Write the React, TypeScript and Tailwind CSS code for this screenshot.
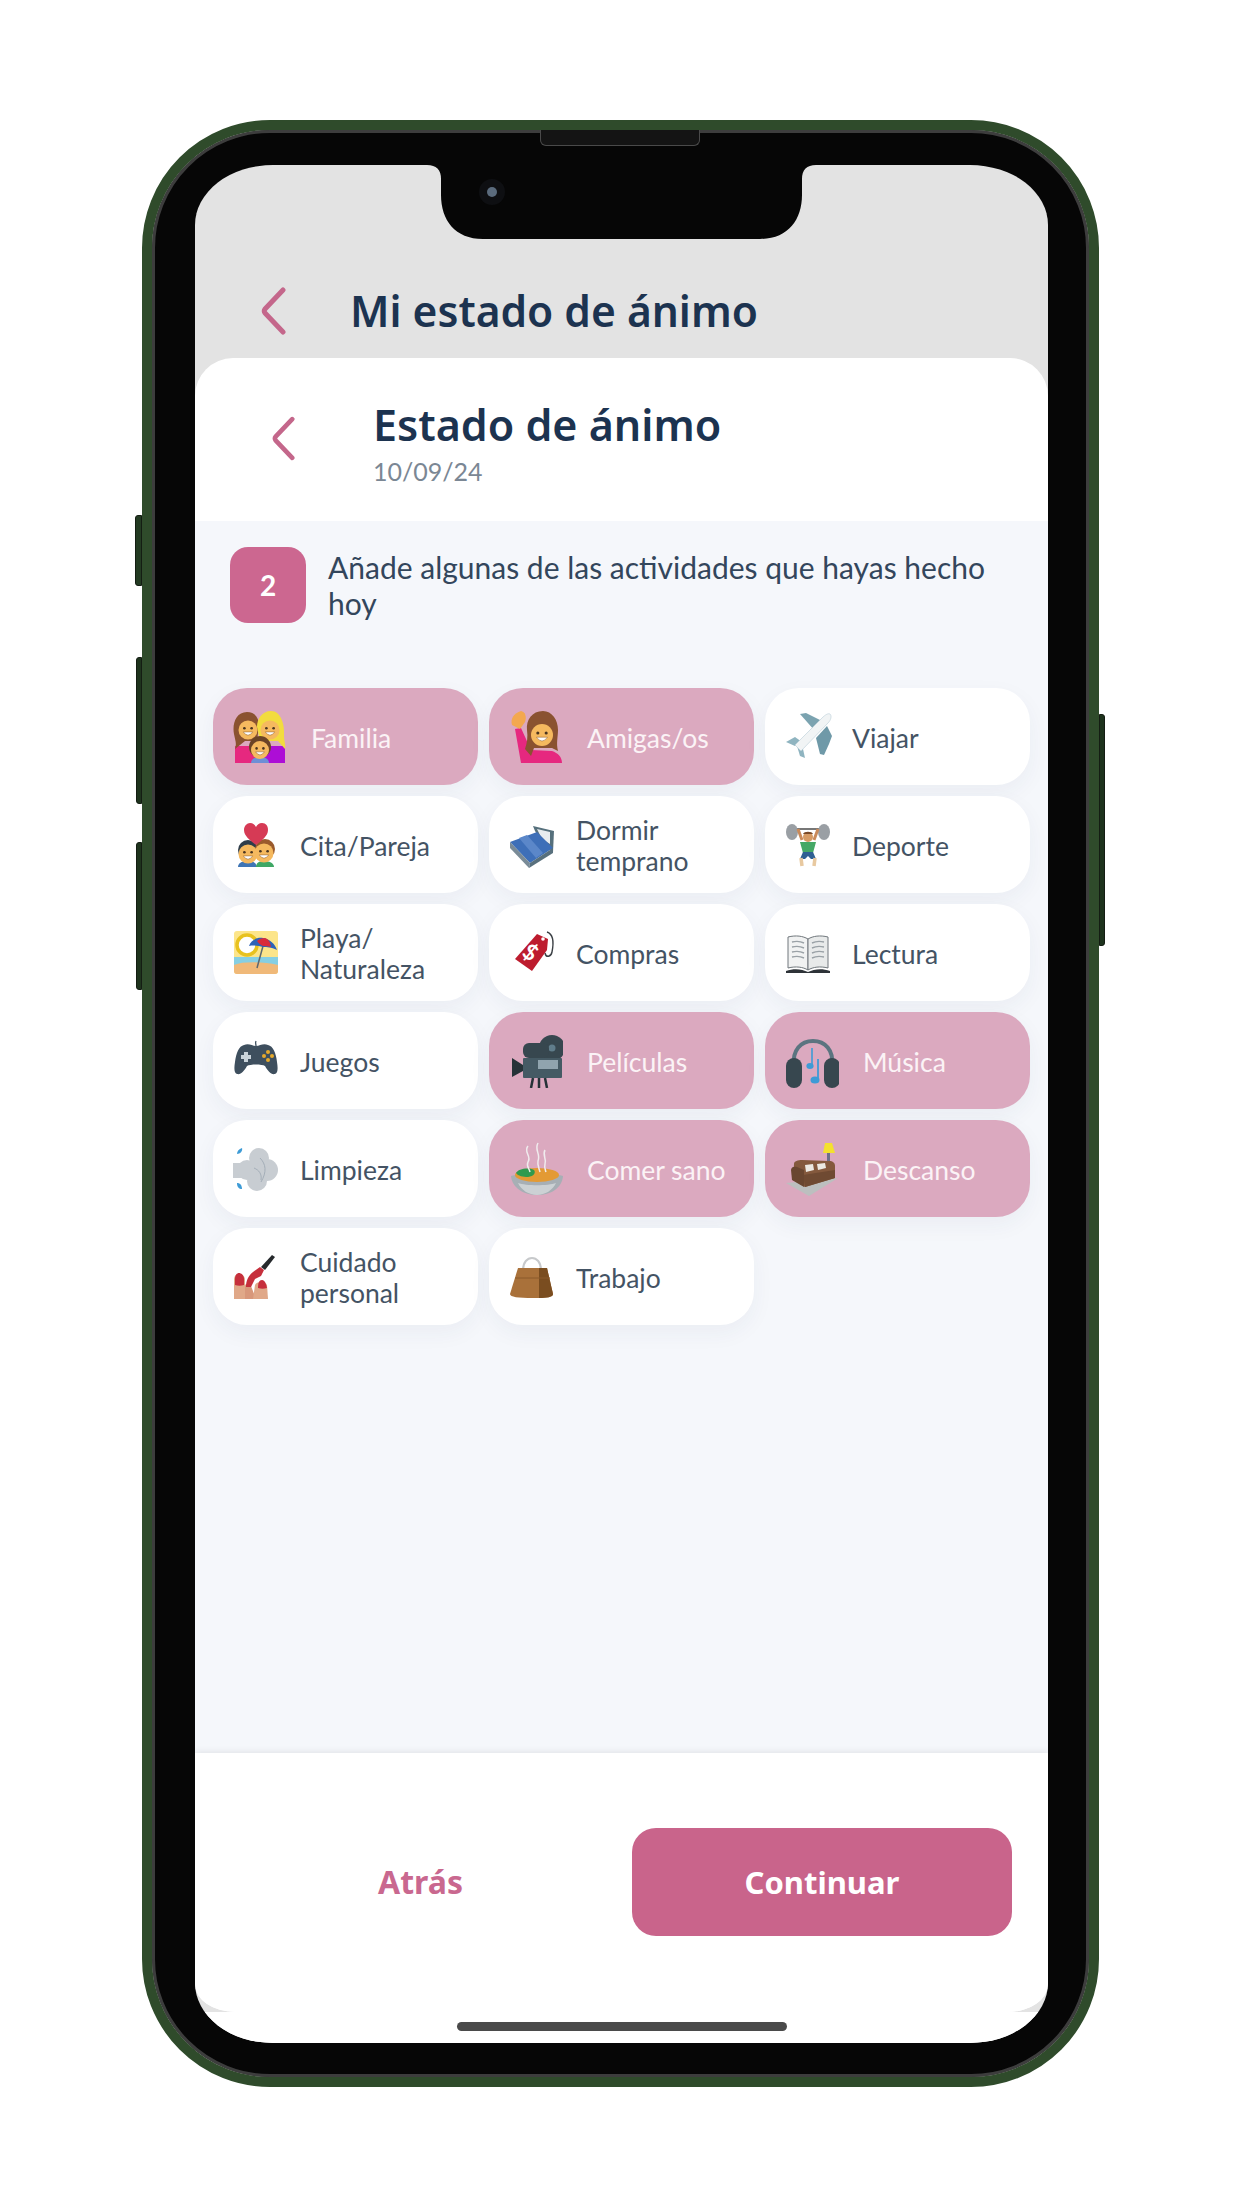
import React from 'react';

const Face = ({ cx, cy, r }: { cx: number; cy: number; r: number }) => (
  <g>
    <circle cx={cx} cy={cy} r={r} fill="#f5b95f" />
    <circle cx={cx - r * 0.38} cy={cy - r * 0.18} r={r * 0.14} fill="#4a3520" />
    <circle cx={cx + r * 0.38} cy={cy - r * 0.18} r={r * 0.14} fill="#4a3520" />
    <path d={`M${cx - r * 0.5} ${cy + r * 0.2}Q${cx} ${cy + r * 0.9} ${cx + r * 0.5} ${cy + r * 0.2}Z`} fill="#fff" stroke="#8a5a2a" strokeWidth="0.5" />
  </g>
);

const Icon = ({ children }: { children: React.ReactNode }) => (
  <svg viewBox="0 0 54 54" className="w-[54px] h-[54px] shrink-0">
    {children}
  </svg>
);

const Familia = () => (
  <Icon>
    <path d="M2 53V36h25v17z" fill="#e6287f" />
    <path d="M26 53V36h26v17z" fill="#ad0ed6" />
    <path d="M14 2C3 2-1 14 1 24c1 6 3 9 1 15l10-8h12l2-15C26 8 22 2 14 2z" fill="#8a5230" />
    <path d="M38 1c-9 0-14 8-14 16l3 14h18l7 8c1-5-1-8-1-13 1-11-3-25-13-25z" fill="#f2dc3e" />
    <Face cx={15} cy={20} r={9.5} />
    <Face cx={37} cy={20} r={9.5} />
    <path d="M18 53c0-4 4-6 9-6s9 2 9 6z" fill="#6d8fd6" />
    <circle cx={27} cy={37} r={11} fill="#6b4426" />
    <Face cx={27} cy={40} r={9} />
  </Icon>
);

const Amigas = () => (
  <Icon>
    <path d="M6 19l6 34h41c0-6-4-10-10-12l-21-1-10-22z" fill="#e6287f" />
    <path d="M3 15C1 9 5 3 12 1c4 1 6 5 4 11l-5 7z" fill="#f3a84f" />
    <path d="M34 1C23 1 17 10 18 20c1 7 0 13-2 19l6 7 3-8h18l6 3c-2-8 0-14 0-21 0-10-6-19-15-19z" fill="#8a5230" />
    <Face cx={33} cy={25} r={11} />
  </Icon>
);

const Viajar = () => (
  <Icon>
    <path d="M15 4l6-1 18 9-9 9z" fill="#7ba3b0" />
    <path d="M44 34l3-8-5-10-11 12 4 16 4 1z" fill="#6f99a8" />
    <path d="M1 32l9-5 7 5-7 4z" fill="#8fb4c0" />
    <path d="M20 48l-2-9-6-3 3 10z" fill="#8fb4c0" />
    <path d="M45 4c2 2 1 6-2 9L16 41l-6-6L37 8c3-3 6-5 8-4z" fill="#f1f4f5" stroke="#b8cdd6" strokeWidth="0.6" />
  </Icon>
);

const Cita = () => (
  <Icon>
    <path d="M5 49c0-4 4-6 10-6s8 2 9 6z" fill="#3f75b5" />
    <path d="M23 49c0-4 3-6 8-6s10 2 10 6z" fill="#3fa765" />
    <circle cx={15} cy={32} r={10} fill="#2f3d4a" />
    <circle cx={32} cy={31} r={10} fill="#9a5a2c" />
    <Face cx={15} cy={36} r={9.5} />
    <Face cx={31} cy={35} r={9.5} />
    <path d="M23 27C17 22 11 18 11 12c0-4 3-7 6-7 3 0 5 2 6 4 1-2 3-4 6-4 4 0 6 3 6 7 0 6-6 10-12 15z" fill="#d63a55" />
  </Icon>
);

const Dormir = () => (
  <Icon>
    <path d="M24 8l21 5-1 21-8-7-10-14z" fill="#56707c" />
    <path d="M28 11l13 3v12l-8-5z" fill="#e8ecef" />
    <path d="M1 24l27-10 16 16-23 15z" fill="#3e6fb8" />
    <path d="M1 24l20 21-1 5L1 30z" fill="#7a8b97" />
    <path d="M21 45l23-15v5L20 50z" fill="#58707d" />
    <path d="M10 20l8-3 16 18-7 5z" fill="#5b87c9" />
  </Icon>
);

const Deporte = () => (
  <Icon>
    <path d="M7 11h32" stroke="#777" strokeWidth="2" />
    <ellipse cx={7} cy={14} rx={6} ry={8} fill="#9a9fa4" />
    <ellipse cx={39} cy={14} rx={6} ry={8} fill="#9a9fa4" />
    <path d="M13 11l4 11M33 11l-4 11" stroke="#c98a5a" strokeWidth="3" />
    <circle cx={23} cy={19} r={5} fill="#d69a63" />
    <path d="M18 16c1-3 9-3 10 0z" fill="#7a4a28" />
    <path d="M15 24h16l-3 11H18z" fill="#45a866" />
    <path d="M18 34h10l3 7h-5l-3-3-3 3h-5z" fill="#2f5f92" />
    <path d="M16 40l1 8M30 40l-1 8" stroke="#e8c9a0" strokeWidth="3.5" />
  </Icon>
);

const Playa = () => (
  <Icon>
    <rect x={1} y={5} width={44} height={43} rx={3} fill="#fce58a" />
    <rect x={1} y={31} width={44} height={8} fill="#86cfe3" />
    <path d="M1 39c10-4 30-3 44 0v6a3 3 0 0 1-3 3H4a3 3 0 0 1-3-3z" fill="#f0b979" />
    <circle cx={14} cy={19} r={10} fill="#fff" stroke="#e8c21f" strokeWidth="3.5" />
    <path d="M30 20l-6 22" stroke="#5c6770" strokeWidth="1.5" />
    <path d="M16 20c2-6 8-9 14-8 7 1 12 6 14 12-6-3-10-3-14-3-4-1-9-2-14-1z" fill="#2e63b8" />
    <path d="M24 15c2-2 5-3 8-3 3 1 5 3 6 9-3-1-6-1-8-1-2-1-4-2-6-5z" fill="#d92b3a" />
  </Icon>
);

const Juegos = () => (
  <Icon>
    <path d="M23 12c0-2-1-3 0-5" stroke="#3e4f5e" strokeWidth="1.3" fill="none" />
    <path d="M11 11c5-2 8 1 12 1s7-3 12-1c5 1 8 8 9 17 1 6 1 11-2 12-4 1-7-3-10-8-3-2-15-2-18 0-3 5-6 9-10 8C1 39 1 34 2 28c1-9 4-16 9-17z" fill="#3e4f5e" />
    <path d="M11 18h4v3h3v4h-3v3h-4v-3H8v-4h3z" fill="#c9d3da" />
    <circle cx={35} cy={18} r={2} fill="#e6a92c" />
    <circle cx={31} cy={22} r={2} fill="#e6a92c" />
    <circle cx={39} cy={22} r={2} fill="#e6a92c" />
    <circle cx={35} cy={26} r={2} fill="#e6a92c" />
  </Icon>
);

const Limpieza = () => (
  <Icon>
    <path d="M0 21h14l3 15H0z" fill="#c8cdd2" />
    <circle cx={26} cy={16} r={10} fill="#c8cdd2" />
    <circle cx={34} cy={28} r={11} fill="#c8cdd2" />
    <circle cx={24} cy={39} r={10} fill="#c8cdd2" />
    <circle cx={14} cy={28} r={10} fill="#c8cdd2" />
    <path d="M27 16c6 6 7 14 1 24M21 26c5 2 8 6 7 12" stroke="#a4aeb8" strokeWidth="1" fill="none" />
    <path d="M9 6c1 3-2 6-5 6 0-3 2-5 5-6zM4 41c3 0 5 2 5 6-3 0-5-2-5-6z" fill="#3d9bd6" />
  </Icon>
);

const Cuidado = () => (
  <Icon>
    <path d="M1 49V30c0-4 2-6 5-6s6 2 6 6v19z" fill="#e0a888" />
    <path d="M12 49V36c0-3 5-3 6 0l5 13z" fill="#d8977a" />
    <path d="M20 49l2-14c1-4 11-4 12 0l1 14z" fill="#e0a888" />
    <path d="M2 35V29c0-4 2-6 4-6s5 2 5 6v6c-3 1-6 1-9 0z" fill="#c62f3c" />
    <path d="M25 38c0-5 1-8 4-8s4 4 5 8c-3 1-6 1-9 0z" fill="#c62f3c" />
    <path d="M13 37c0-6 2-11 7-15l7-5 4 3-3 6-6 3-4 8z" fill="#c62f3c" />
    <path d="M28 17l11-12 3 2-10 13z" fill="#26292c" />
  </Icon>
);

const Trabajo = () => (
  <Icon>
    <path d="M14 20c0-16 18-16 18 0" fill="none" stroke="#c7c9cb" strokeWidth="2" />
    <path d="M9 18h29l6 26c0 3-5 4-20 4-15 0-23-1-23-4z" fill="#a9713a" />
    <path d="M30 18h8l6 26c0 3-6 4-14 4z" fill="#7a4d20" />
    <path d="M6 28h35" stroke="#8a5a2a" strokeWidth="1" />
  </Icon>
);

const Compras = () => (
  <Icon>
    <path d="M38 6c6 2 7 10 5 20-1 5-6 6-7 1" fill="none" stroke="#3a3f44" strokeWidth="1.4" />
    <path d="M28 8l11 5-1 11-15 21L6 33z" fill="#bd1c2e" />
    <circle cx={34} cy={13} r={1.8} fill="#fff" />
    <text x={21} y={34} fontSize="22" fontWeight="700" fill="#fff" fontFamily="Lato, sans-serif" textAnchor="middle" transform="rotate(35 21 27)">$</text>
  </Icon>
);

const Peliculas = () => (
  <Icon>
    <circle cx={43} cy={14} r={13} fill="#37474f" />
    <circle cx={43} cy={14} r={3.5} fill="#607d8b" />
    <rect x={14} y={9} width={26} height={15} rx={6} fill="#37474f" />
    <rect x={14} y={24} width={39} height={20} rx={1} fill="#455a64" />
    <rect x={29} y={26} width={20} height={9} fill="#90a4ae" />
    <path d="M3 24l11 7v6L3 43z" fill="#263238" />
    <path d="M24 44l-2 10M30 44v10M36 44l2 10" stroke="#263238" strokeWidth="2.5" />
  </Icon>
);

const Musica = () => (
  <Icon>
    <path d="M9 32C7 16 16 7 28 7s21 9 19 25" fill="none" stroke="#5b7480" strokeWidth="4" />
    <rect x={1} y={24} width={16} height={30} rx={8} fill="#37474f" />
    <rect x={39} y={24} width={16} height={30} rx={8} fill="#37474f" />
    <path d="M27 14v18" stroke="#3d9bd6" strokeWidth="1.6" />
    <ellipse cx={25} cy={32} rx={3.6} ry={3} fill="#3d9bd6" />
    <path d="M33 25v20" stroke="#3d9bd6" strokeWidth="1.8" />
    <ellipse cx={30} cy={46} rx={4.5} ry={3.6} fill="#3d9bd6" />
  </Icon>
);

const ComerSano = () => (
  <Icon>
    <path d="M2 34c8-3 44-3 52 0-1 12-12 19-26 19C15 53 3 46 2 34z" fill="#a7afb5" />
    <path d="M9 41c8 3 30 3 38 0-3 7-11 12-19 12S12 48 9 41z" fill="#ccd1d4" />
    <ellipse cx={28} cy={33} rx={22} ry={7} fill="#e39a34" />
    <path d="M7 31c2-4 12-6 18-3 2 3 0 6-6 7-5 0-10-1-12-4z" fill="#2f9a4e" />
    <path d="M19 4c-5 6 4 10 0 16-2 4 1 6 2 10M29 1c-4 7 3 11 0 18-1 4 1 7 2 11M36 8c-3 5 2 9 0 14-1 3 0 5 1 8" fill="none" stroke="#f0ecee" strokeWidth="1.5" />
  </Icon>
);

const Descanso = () => (
  <Icon>
    <path d="M1 41l52-5-29 18z" fill="#bcbfbf" />
    <path d="M42 10h3v16h-3z" fill="#6b6f8a" />
    <path d="M40 1h7l3 10H38z" fill="#f4e12e" />
    <path d="M9 22c0-3 4-4 8-4l27 1c4 0 6 2 6 5v12L20 45 8 38z" fill="#84593d" />
    <path d="M18 33l32-5v8L20 45z" fill="#6f4a32" />
    <path d="M6 28c0-3 3-4 6-3l7 3v17L7 38z" fill="#694630" />
    <path d="M20 23l8-1 1 6-8 2zM32 22l8-1 1 5-8 2z" fill="#ece9e2" />
  </Icon>
);

const Lectura = () => (
  <Icon>
    <path d="M1 45c8-3 16-2 22 1 6-3 14-4 22-1v2H1z" fill="#2e3338" />
    <path d="M3 11c8-2 15-1 20 2v31c-5-3-12-4-20-2z" fill="#f1f2f2" stroke="#70777c" strokeWidth="1" />
    <path d="M43 11c-8-2-15-1-20 2v31c5-3 12-4 20-2z" fill="#e8eaea" stroke="#70777c" strokeWidth="1" />
    <path d="M7 16c4-1 8-1 12 1M7 21c4-1 8-1 12 1M7 26c4-1 8-1 12 1M7 31c4-1 8-1 12 1M39 16c-4-1-8-1-12 1M39 21c-4-1-8-1-12 1M39 26c-4-1-8-1-12 1M39 31c-4-1-8-1-12 1" fill="none" stroke="#9aa1a6" strokeWidth="1.4" />
  </Icon>
);

const activities = [
  { label: 'Familia', icon: Familia, on: true },
  { label: 'Amigas/os', icon: Amigas, on: true },
  { label: 'Viajar', icon: Viajar },
  { label: 'Cita/Pareja', icon: Cita },
  { label: 'Dormir temprano', icon: Dormir },
  { label: 'Deporte', icon: Deporte },
  { label: 'Playa/ Naturaleza', icon: Playa },
  { label: 'Compras', icon: Compras },
  { label: 'Lectura', icon: Lectura },
  { label: 'Juegos', icon: Juegos },
  { label: 'Películas', icon: Peliculas, on: true },
  { label: 'Música', icon: Musica, on: true },
  { label: 'Limpieza', icon: Limpieza },
  { label: 'Comer sano', icon: ComerSano, on: true },
  { label: 'Descanso', icon: Descanso, on: true },
  { label: 'Cuidado personal', icon: Cuidado },
  { label: 'Trabajo', icon: Trabajo },
];

const Chevron = ({ className }: { className: string }) => (
  <svg viewBox="0 0 26 48" className={className} fill="none" stroke="#c4678b" strokeWidth="5" strokeLinecap="round" strokeLinejoin="round">
    <path d="M23 3L5 22q-1.500 2 0 4l18 19" />
  </svg>
);

export default function App() {
  return (
    <div className="w-[1242px] h-[2208px] bg-white pt-[120px] pl-[142px] overflow-hidden font-['Lato',sans-serif]">
      {/* Phone body */}
      <div className="relative w-[957px] h-[1967px] rounded-[128px] border-[10px] border-[#2f4b2b] shadow-[inset_0_0_0_1px_#1b2419]">
        {/* side buttons */}
        <div className="absolute left-[-17px] top-[385px] w-[7px] h-[71px] rounded-l-[3px] bg-[#233a22] border border-[#141d13]" />
        <div className="absolute left-[-16px] top-[527px] w-[6px] h-[147px] rounded-l-[3px] bg-[#1e331d] border border-[#141d13]" />
        <div className="absolute left-[-16px] top-[712px] w-[6px] h-[148px] rounded-l-[3px] bg-[#1e331d] border border-[#141d13]" />
        <div className="absolute right-[-16px] top-[584px] w-[6px] h-[232px] rounded-r-[3px] bg-[#1e331d] border border-[#141d13]" />

        <div className="w-full h-full rounded-[118px] border-[3px] border-[#3d3d3d] bg-[#060606] pt-[32px] pb-[31px] pl-[40px] pr-[38px]">
          {/* Screen */}
          <div className="relative h-full rounded-[78px/60px] overflow-hidden bg-[#e3e3e3] flex flex-col">
            <div className="h-[193px] shrink-0 pt-[99px] pl-[65px] flex items-center">
              <Chevron className="w-[26px] h-[48px] shrink-0" />
              <span className="ml-[64px] font-['Noto_Sans',sans-serif] font-semibold text-[42.500px] text-[#1c3350] leading-none">Mi estado de ánimo</span>
            </div>

            {/* Sheet */}
            <div className="h-[1654px] shrink-0 [border-radius:38px_38px_40px_40px/38px_38px_28px_28px] overflow-hidden bg-white flex flex-col">
              <div className="h-[163px] shrink-0 flex items-start pl-[76px]">
                <Chevron className="w-[24px] h-[45px] shrink-0 mt-[58px]" />
                <div className="ml-[78px] pt-[40px]">
                  <div className="font-['Noto_Sans',sans-serif] font-semibold text-[43px] leading-[54px] text-[#1c3350]">Estado de ánimo</div>
                  <div className="text-[25px] leading-[32px] mt-[3px] text-[#7b8794]">10/09/24</div>
                </div>
              </div>

              <div className="flex-1 bg-[#f5f7fb] px-[18px] pt-[26px]">
                <div className="flex items-start pl-[17px]">
                  <div className="w-[76px] h-[76px] shrink-0 rounded-[18px] bg-[#cc6790] text-white font-bold text-[28px] flex items-center justify-center">2</div>
                  <p className="ml-[22px] w-[690px] text-[30px] leading-[36px] text-[#33465c] pt-[2px]">Añade algunas de las actividades que hayas hecho hoy</p>
                </div>

                <div className="grid grid-cols-3 gap-x-[11px] gap-y-[11px] mt-[65px]">
                  {activities.map(({ label, icon: ActivityIcon, on }) => (
                    <div
                      key={label}
                      className={on
                        ? 'h-[97px] rounded-[34px] bg-[#dba9bf] pl-[20px] flex items-center gap-[24px] text-[#fbf3f6] text-[26.500px] leading-[31px] shadow-[0_8px_22px_rgba(40,50,90,0.05)]'
                        : 'h-[97px] rounded-[34px] bg-white pl-[20px] flex items-center gap-[13px] text-[#445364] text-[26.500px] leading-[31px] shadow-[0_8px_22px_rgba(40,50,90,0.05)]'}
                    >
                      <ActivityIcon />
                      <span className="w-[165px] pt-[3px]">{label}</span>
                    </div>
                  ))}
                </div>
              </div>

              <div className="h-[259px] shrink-0 bg-white shadow-[0_-2px_6px_rgba(0,0,0,0.07)] flex items-start pt-[75px]">
                <div className="w-[437px] h-[108px] pl-[14px] flex items-center justify-center text-[32px] font-bold text-[#c9688f] font-['Noto_Sans',sans-serif]">Atrás</div>
                <div className="w-[380px] h-[108px] rounded-[24px] bg-[#c9648b] text-white text-[31px] font-bold flex items-center justify-center font-['Noto_Sans',sans-serif]">Continuar</div>
              </div>
            </div>

            <div className="flex-1 bg-white flex justify-center pt-[10px]">
              <div className="w-[330px] h-[9px] rounded-full bg-[#4a4a4a]" />
            </div>

            {/* Notch */}
            <svg viewBox="0 0 389 74" className="absolute top-0 left-[232px] w-[389px] h-[74px]">
              <path d="M0 0Q14 0 14 14V30C14 55 28 74 56 74H333C361 74 375 55 375 30V14Q375 0 389 0Z" fill="#060606" />
              <circle cx={65} cy={27} r={13} fill="#0e0f12" />
              <circle cx={65} cy={27} r={5} fill="#5b6b7d" />
            </svg>
          </div>
        </div>

        {/* Speaker */}
        <div className="absolute left-[388px] top-0 w-[160px] h-[16px] rounded-b-[6px] bg-[#141414] border border-t-0 border-[#4a4a4a]" />
      </div>
    </div>
  );
}
